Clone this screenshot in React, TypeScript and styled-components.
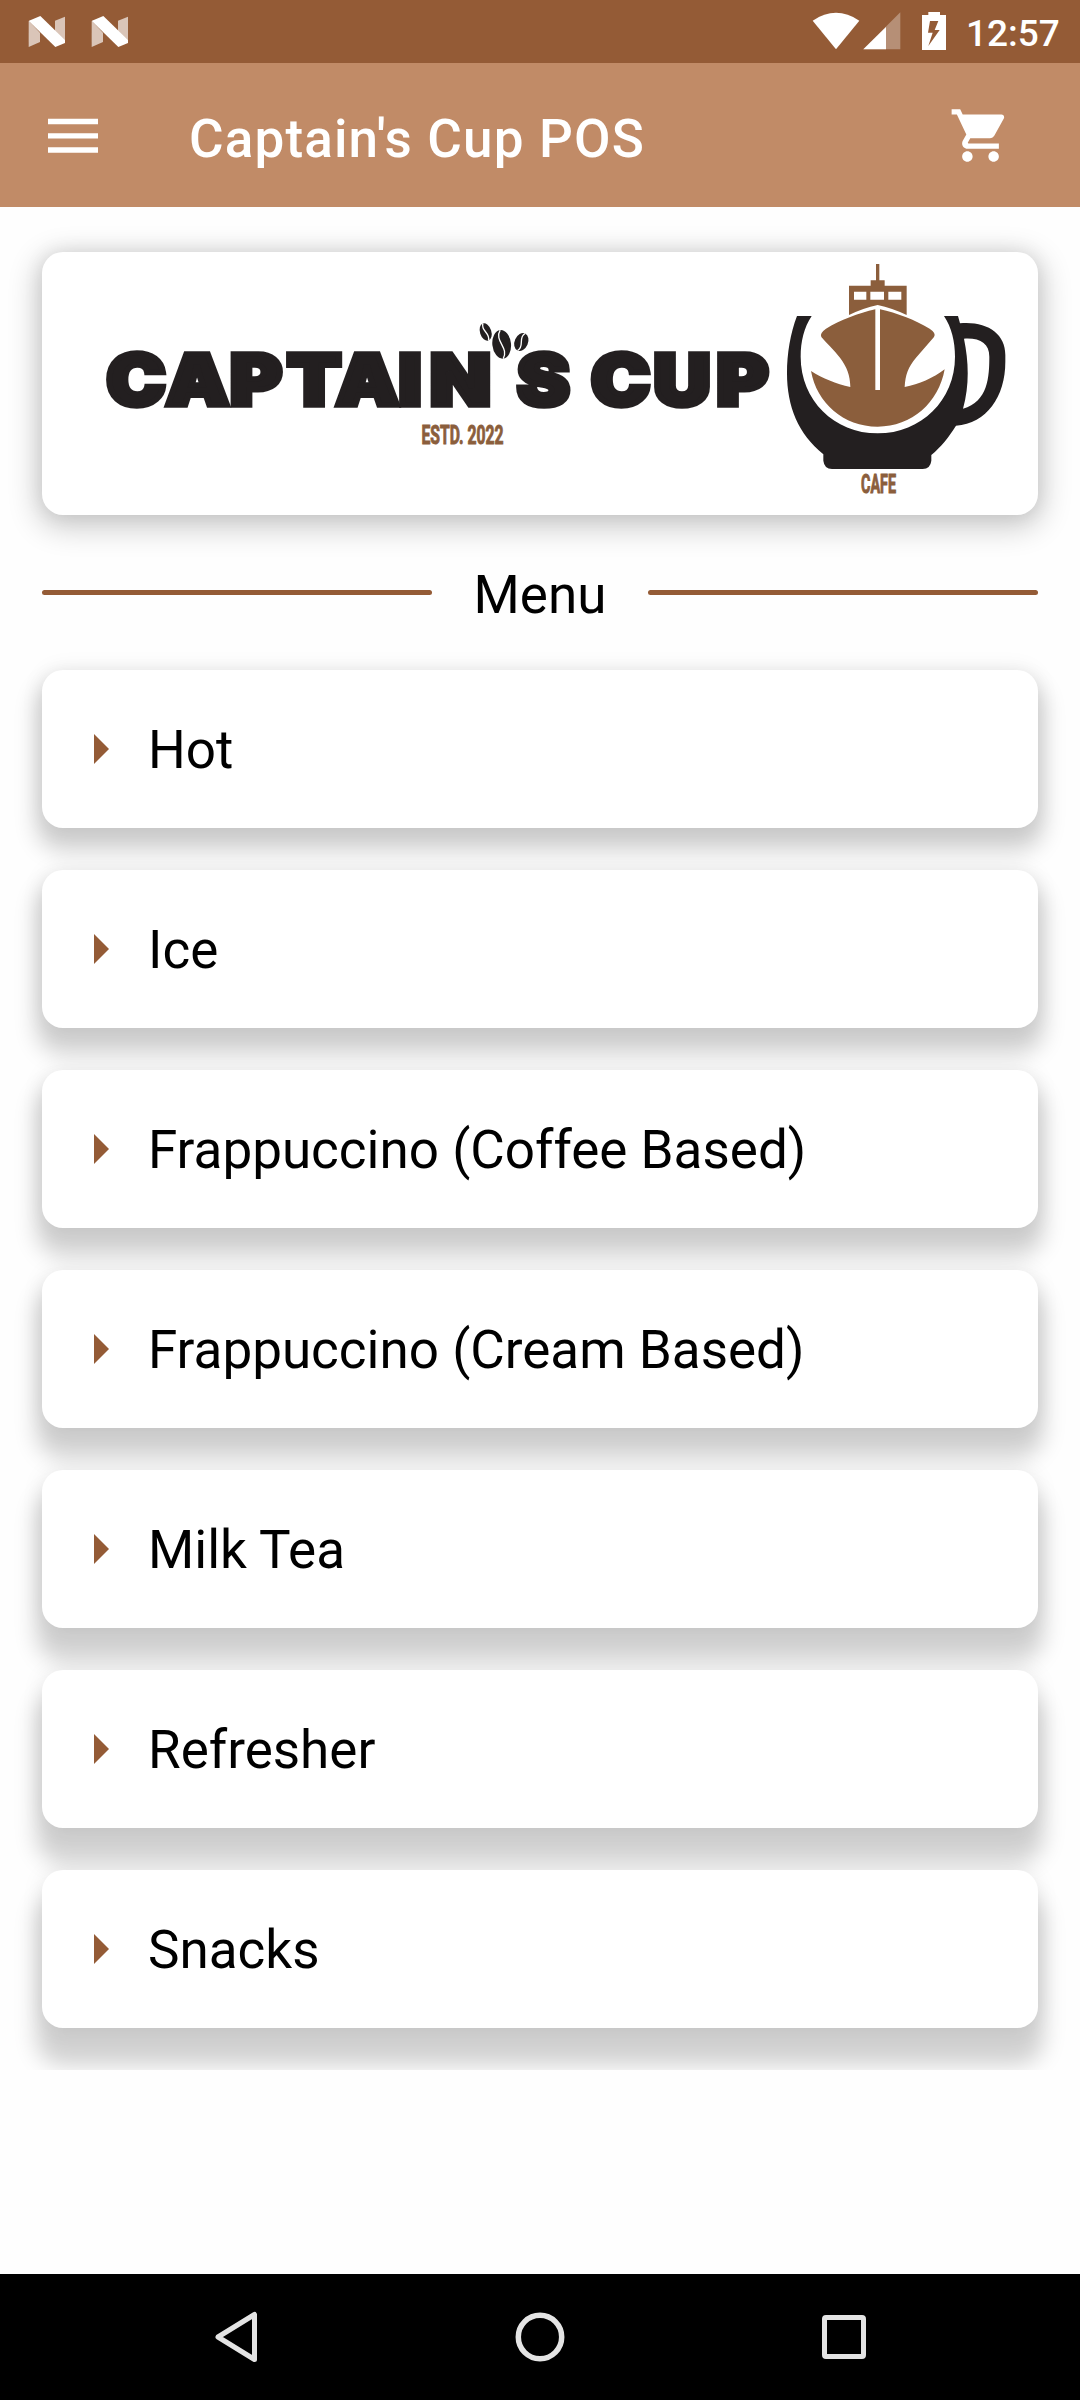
import React from "react";
import styled, { createGlobalStyle } from "styled-components";

const GlobalStyle = createGlobalStyle`
  body { margin: 0; background: #fefefe; }
  * { box-sizing: border-box; }
`;

const Screen = styled.div`
  width: 1080px;
  height: 2400px;
  display: flex;
  flex-direction: column;
  overflow: hidden;
  background: #fefefe;
  color: #000;
  font-family: Roboto, "Liberation Sans", sans-serif;
`;

const StatusBar = styled.header`
  flex: none;
  height: 63px;
  padding-left: 2px;
  background: #945b36;
  color: #fff;
  display: flex;
  justify-content: space-between;
`;

const StatusGroup = styled.div`
  display: flex;
`;

const Clock = styled.span`
  width: 120px;
  padding-left: 6px;
  font-size: 37px;
  font-weight: 500;
  line-height: 67px;
`;

const AppBar = styled.nav`
  flex: none;
  height: 144px;
  padding: 0 68px 0 48px;
  background: #c18b67;
  color: #fff;
  display: flex;
  align-items: center;
`;

const Title = styled.h1`
  flex: 1;
  margin: 0 0 0 91px;
  padding-top: 7px;
  font-size: 53px;
  font-weight: 500;
  line-height: 62px;
  letter-spacing: 1.15px;
`;

const IconButton = styled.button`
  display: flex;
  padding: 1px 0 0;
  border: 0;
  background: none;
  color: inherit;
`;

const Content = styled.main`
  flex: 1;
  display: flex;
  flex-direction: column;
`;

const LogoCard = styled.section`
  flex: none;
  height: 263px;
  margin: 45px 42px 0;
  border-radius: 21px;
  background: #fff;
  box-shadow: 0 8px 30px 5px rgba(0, 0, 0, 0.2), 0 0 20px rgba(0, 0, 0, 0.08);
`;

const SectionHeading = styled.div`
  display: flex;
  align-items: center;
  height: 155px;
  padding: 0 42px;
`;

const Rule = styled.span`
  flex: 1;
  height: 5px;
  border-radius: 3px;
  background: #945b36;
`;

const HeadingText = styled.h2`
  width: 216px;
  margin: 0;
  padding-top: 5px;
  text-align: center;
  font-size: 53px;
  font-weight: 400;
  line-height: 62px;
`;

const MenuList = styled.ul`
  flex: none;
  margin: -30px 0 0;
  padding: 30px 42px 42px;
  display: flex;
  flex-direction: column;
  gap: 42px;
  list-style: none;
  overflow: hidden;
`;

const MenuRow = styled.li<{ $drop: number }>`
  height: 158px;
  padding: 0 42px 0 52px;
  display: flex;
  align-items: center;
  gap: 39px;
  border-radius: 21px;
  background: #fff;
  box-shadow: 0 ${(p) => p.$drop}px 22px 6px rgba(0, 0, 0, 0.18),
    0 0 22px rgba(0, 0, 0, 0.08);
`;

const Caret = styled.span`
  width: 0;
  height: 0;
  border-left: 15px solid #945b36;
  border-top: 15px solid transparent;
  border-bottom: 15px solid transparent;
`;

const RowLabel = styled.span`
  padding-top: 2px;
  font-size: 53px;
  line-height: 62px;
`;

const SystemBar = styled.footer`
  flex: none;
  height: 126px;
  padding: 0 206px;
  background: #000;
  display: flex;
  align-items: center;
  justify-content: space-between;
`;

const NougatIcon = () => (
  <svg width="63" height="63" viewBox="0 0 189 189">
    <path d="M80 62 114 98V126L80 141Z" fill="#fff" opacity=".65" />
    <path d="M159 62 195 48V127L159 92Z" fill="#fff" opacity=".65" />
    <path d="M81 62 115 48 193 124V127L160 141 81 64Z" fill="#fff" />
  </svg>
);

const StatusIcons = () => (
  <svg width="150" height="63" viewBox="270 0 450 189">
    <path d="M278 62Q348 15 418 62L348 148Z" fill="#fff" />
    <path d="M541 37V148H430Z" fill="#fff" opacity=".32" />
    <path d="M498 81V148H430Z" fill="#fff" />
    <path
      fill="#fff"
      fillRule="evenodd"
      d="M625 36H660V45H678V150H606V45H625ZM630 63 624 98H638L625 138 659 90H644L655 63Z"
    />
  </svg>
);

const HamburgerIcon = () => (
  <svg width="50" height="36" viewBox="0 0 50 36">
    <path d="M0 .8H50V6.3H0ZM0 15.2H50V20.6H0ZM0 29.3H50V34.8H0Z" fill="#fff" />
  </svg>
);

const CartIcon = () => (
  <svg width="63" height="63" viewBox="0 0 24 24" fill="#fff">
    <path d="M7 18c-1.1 0-1.99.9-1.99 2S5.9 22 7 22s2-.9 2-2-.9-2-2-2zM1 2v2h2l3.6 7.59-1.35 2.45c-.16.28-.25.61-.25.96 0 1.1.9 2 2 2h12v-2H7.42c-.14 0-.25-.11-.25-.25l.03-.12.9-1.63h7.45c.75 0 1.41-.41 1.75-1.03l3.58-6.49c.08-.14.12-.31.12-.48 0-.55-.45-1-1-1H5.21l-.94-2H1zm16 16c-1.1 0-1.99.9-1.99 2s.89 2 1.99 2 2-.9 2-2-.9-2-2-2z" />
  </svg>
);

const Bean = ({ x, y, rx, ry, tilt }: { x: number; y: number; rx: number; ry: number; tilt: number }) => (
  <g transform={`translate(${x} ${y}) rotate(${tilt})`}>
    <ellipse rx={rx} ry={ry} fill="#231f20" />
    <path
      d={`M0 ${-ry}C${-rx * 0.8} ${-ry * 0.3} ${rx * 0.8} ${ry * 0.3} 0 ${ry}`}
      fill="none"
      stroke="#fff"
      strokeWidth="4"
    />
  </g>
);

const STRETCH = 1.13;
const spread = (xs: number[]) => xs.map((x) => (x / STRETCH).toFixed(2)).join(" ");

const Logo = () => (
  <svg width="996" height="263" viewBox="0 0 996 263">
    <g
      transform={`scale(${STRETCH} 1)`}
      fill="#231f20"
      stroke="#231f20"
      strokeWidth="5.500"
      fontFamily="Inter, Roboto, sans-serif"
      fontWeight="900"
      fontSize="70"
    >
      <text y="153" x={spread([64.500, 124, 188, 245, 294, 356.5, 388])}>CAPTAIN</text>
      <text y="153" x={spread([475])}>S</text>
      <text y="153" x={spread([549, 611.5, 674.500])}>CUP</text>
    </g>
    <g fill="#8b5e3c" stroke="#8b5e3c" strokeWidth="1" fontFamily="Roboto, sans-serif" fontWeight="700" fontSize="26">
      <text x="379.500" y="191.500" textLength="82" lengthAdjust="spacingAndGlyphs">ESTD. 2022</text>
      <text x="819" y="241.300" textLength="35" lengthAdjust="spacingAndGlyphs">CAFE</text>
    </g>
    <g transform="translate(358 48) scale(.33333)">
      <Bean x={257} y={96} rx={17} ry={27} tilt={-18} />
      <Bean x={305} y={133} rx={28} ry={43} tilt={-6} />
      <Bean x={364} y={126} rx={20} ry={28} tilt={24} />
    </g>
    <g transform="translate(718 -12) scale(.33333)">
      <path
        fill="#231f20"
        d="M111 228H155C132 262 122 305 122 350C122 480 222 580 353 580S585 480 585 350C585 305 575 262 552 228H594L600 250C680 243 736 280 736 345V365C736 470 680 550 588 557C566 592 544 620 514 645V662Q511 687 488 687H216Q193 687 190 662V643C115 582 81 500 81 400C81 340 91 280 111 228Z"
      />
      <path fill="#fff" d="M612 296C660 293 688 310 688 350C688 410 684 485 609 506C629 435 626 365 612 296Z" />
      <path
        fill="#8b5e3c"
        fillRule="evenodd"
        d="M348 72H358V121H374V137H440V225Q396 204 353 195Q310 204 267 225V137H332V121H348ZM282 155V179H319V155ZM331 155V179H372V155ZM385 155V179H424V155Z"
      />
      <path
        fill="#8b5e3c"
        d="M346 208V450H360V208C410 219 465 240 509 266Q530 280 522 291L468 353C444 382 436 404 434 441C478 433 518 415 554 388C536 488 456 560 353 560S170 488 153 393C188 415 228 432 271 441C270 404 261 382 240 353C220 328 200 310 184 291Q178 280 198 266C240 241 296 219 346 208Z"
      />
    </g>
  </svg>
);

const NavIcon = ({ kind }: { kind: "back" | "home" | "recent" }) => (
  <svg width="60" height="60" viewBox="0 0 60 60" fill="none" stroke="#e4e4e4" strokeWidth="5" strokeLinejoin="round">
    {kind === "back" && <path d="M48.500 7.500V52.500L12 30Z" />}
    {kind === "home" && <circle cx="30" cy="30" r="21.700" strokeWidth="5.500" />}
    {kind === "recent" && <rect x="10.500" y="10.500" width="39" height="39" rx="1.500" />}
  </svg>
);

const categories = [
  "Hot",
  "Ice",
  "Frappuccino (Coffee Based)",
  "Frappuccino (Cream Based)",
  "Milk Tea",
  "Refresher",
  "Snacks",
];

export default function App() {
  return (
    <Screen>
      <GlobalStyle />
      <StatusBar>
        <StatusGroup>
          <NougatIcon />
          <NougatIcon />
        </StatusGroup>
        <StatusGroup>
          <StatusIcons />
          <Clock>12:57</Clock>
        </StatusGroup>
      </StatusBar>
      <AppBar>
        <IconButton aria-label="Open navigation">
          <HamburgerIcon />
        </IconButton>
        <Title>Captain's Cup POS</Title>
        <IconButton aria-label="Cart">
          <CartIcon />
        </IconButton>
      </AppBar>
      <Content>
        <LogoCard>
          <Logo />
        </LogoCard>
        <SectionHeading>
          <Rule />
          <HeadingText>Menu</HeadingText>
          <Rule />
        </SectionHeading>
        <MenuList>
          {categories.map((name, i) => (
            <MenuRow key={name} $drop={17 + i * 2.3}>
              <Caret />
              <RowLabel>{name}</RowLabel>
            </MenuRow>
          ))}
        </MenuList>
      </Content>
      <SystemBar>
        <NavIcon kind="back" />
        <NavIcon kind="home" />
        <NavIcon kind="recent" />
      </SystemBar>
    </Screen>
  );
}
